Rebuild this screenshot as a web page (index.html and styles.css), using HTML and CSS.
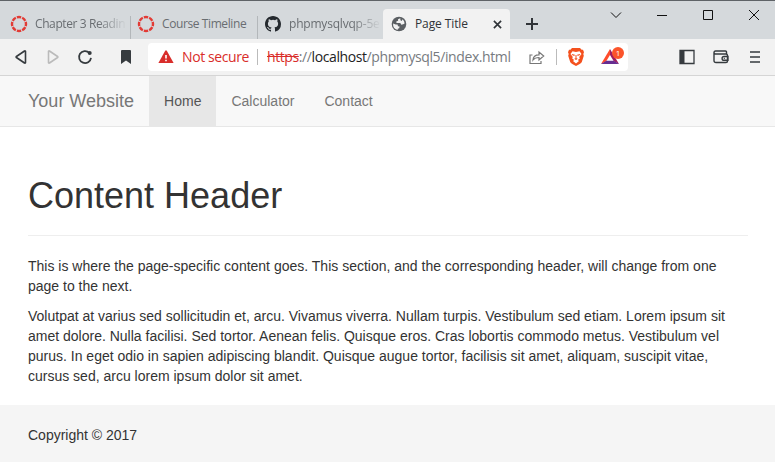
FILE: index.html
```html
<!DOCTYPE html>
<html lang="en">
<head>
<meta charset="utf-8">
<title>Page Title</title>
<link rel="stylesheet" href="styles.css">
</head>
<body>
<div class="tabstrip">
  <div class="tab">
    <svg class="favicon" viewBox="0 0 16 16"><circle class="ring" cx="8" cy="8" r="7" pathLength="80"/></svg>
    <span class="tab-title fade">Chapter 3 Readin</span>
  </div>
  <div class="tab">
    <svg class="favicon" viewBox="0 0 16 16"><circle class="ring" cx="8" cy="8" r="7" pathLength="80"/></svg>
    <span class="tab-title">Course Timeline</span>
  </div>
  <div class="tab tab-github">
    <svg class="favicon" viewBox="0 0 16 16"><path fill="#24292e" d="M8 0C3.58 0 0 3.58 0 8c0 3.54 2.29 6.53 5.47 7.59.4.07.55-.17.55-.38 0-.19-.01-.82-.01-1.49-2.01.37-2.53-.49-2.69-.94-.09-.23-.48-.94-.82-1.13-.28-.15-.68-.52-.01-.53.63-.01 1.08.58 1.23.82.72 1.21 1.87.87 2.33.66.07-.52.28-.87.51-1.07-1.78-.2-3.64-.89-3.64-3.95 0-.87.31-1.59.82-2.15-.08-.2-.36-1.02.08-2.12 0 0 .67-.21 2.2.82a7.6 7.6 0 0 1 4 0c1.53-1.04 2.2-.82 2.2-.82.44 1.1.16 1.92.08 2.12.51.56.82 1.27.82 2.15 0 3.07-1.87 3.75-3.65 3.95.29.25.54.73.54 1.48 0 1.07-.01 1.93-.01 2.2 0 .21.15.46.55.38A8.01 8.01 0 0 0 16 8c0-4.42-3.58-8-8-8z"/></svg>
    <span class="tab-title fade">phpmysqlvqp-5e</span>
  </div>
  <div class="tab tab-active">
    <svg class="favicon" viewBox="0 0 16 16"><circle cx="8" cy="8" r="7.3" fill="#5b5f63"/><path fill="#f2f2f2" d="M9.3 2.2 7 3.2l.1 1.6-1.8.6.2 1.7h3.8l1 1.6 1.9-.4 1.4-.8A6 6 0 0 0 11.6 3.2L10.7 5 9.4 4.3zM2.1 7.6l2.6.8 1.8.2.5 1.7 1.6.3-.4 1.6-1.4.5-.2 1.3A6 6 0 0 1 2.1 7.6z"/></svg>
    <span class="tab-title">Page Title</span>
    <svg class="tab-close" viewBox="0 0 10 10"><path d="m1 1 8 8m0-8-8 8"/></svg>
  </div>
  <svg class="new-tab" viewBox="0 0 12 12"><path d="M6 0v12M0 6h12"/></svg>
  <div class="window-controls">
    <svg viewBox="0 0 12 12"><path d="m1 3.5 5 5 5-5"/></svg>
    <svg viewBox="0 0 12 12"><path d="M1 6.5h10"/></svg>
    <svg viewBox="0 0 12 12"><path d="M1.5 1.5h9v9h-9z"/></svg>
    <svg viewBox="0 0 12 12"><path d="m1 1 10 10M11 1 1 11"/></svg>
  </div>
</div>
<div class="toolbar">
  <svg class="back" viewBox="0 0 16 16"><path d="M11.5 2.5v11a.6.6 0 0 1-1 .5L2.4 8.5a.6.6 0 0 1 0-1L10.500 2a.6.6 0 0 1 1 .5z"/></svg>
  <svg class="forward" viewBox="0 0 16 16"><path d="M3.500 2.500v11a.6.6 0 0 0 1 .5l8.100-5.500a.6.6 0 0 0 0-1L4.500 2a.6.6 0 0 0-1 .5z"/></svg>
  <svg class="reload" viewBox="0 0 16 16"><path d="M12.3 3.800A6 6 0 1 0 14 8.800"/><circle cx="12.700" cy="4" r="2" /></svg>
  <svg class="bookmark" viewBox="0 0 10 14"><path d="M1 0h8q1 0 1 1v13l-5-3.600L0 14V1q0-1 1-1z"/></svg>
  <div class="address">
    <svg class="warning" viewBox="0 0 16 14"><path fill="#d92d2a" d="M7.200.8q.8-1.200 1.600 0L15.600 13H.4z"/><path fill="#fff" d="M7.200 5h1.600v3.500H7.200zM7.200 9.700h1.600v1.600H7.200z"/></svg>
    <span class="insecure">Not secure</span>
    <span class="divider"></span>
    <span class="url"><s>https</s>://<b>localhost</b>/phpmysql5/index.html</span>
    <svg class="share" viewBox="0 0 16 16"><path d="M3.500 6H1v8.500h11V12M4 11c.2-3.600 2.200-5.200 6-5.200V3l4.700 4-4.700 4V8.500C7 8.500 5.500 9 4 11z"/></svg>
    <span class="divider divider-actions"></span>
    <svg class="brave" viewBox="0 0 16 18"><path fill="#f4511e" d="m4 0h8l1.600 1.800 1.400-.1 1 2.600-.7 1.700.5 1.700-2 6.300q-.5 1.300-5.800 4-5.300-2.700-5.800-4l-2-6.300.5-1.700L0 4.300l1-2.600 1.400.1z"/><path fill="#fff" d="m4.500 3.300 3.500.7 3.500-.7 2 2.800-2.300 2.900.6 1.500-2 1.600 1.200 1-3 2.300-3-2.300 1.200-1-2-1.600.6-1.500-2.300-2.900z"/><path fill="#f4511e" d="M3.800 6.100 7 6.800l-.8 1.200-2.200-.9zM12.200 6.100 9 6.800l.8 1.200 2.200-.9zM7.500 7h1v3.200l1.300.6-1.800 1.200-1.800-1.200 1.300-.6z"/></svg>
    <span class="rewards">
      <svg viewBox="0 0 18 16"><path fill="#ff4c2c" d="M9 0 0 15l5.200-2.700L9 6z"/><path fill="#9e1f63" d="m9 0 9 15-5.200-2.700L9 6z"/><path fill="#662d91" d="M0 15h18l-5.200-3.300H5.200z"/></svg>
      <span class="badge">1</span>
    </span>
  </div>
  <svg class="sidebar" viewBox="0 0 16 16"><path fill="none" stroke="#363b3f" stroke-width="1.300" d="M1 1.500h14v13H1z"/><path fill="#363b3f" d="M1 1.500h4.500v13H1z"/></svg>
  <svg class="wallet" viewBox="0 0 16 16"><path d="M13.500 5V3q0-1-1-1H2.500Q1 2 1 3.500T2.500 5H13q1.500 0 1.500 1.500v5.500q0 1.500-1.500 1.500H3Q1 13.500 1 11.500v-8M15 7.500h-4a1.900 1.900 0 0 0 0 3.800h4zM10.800 9.400h1"/></svg>
  <svg class="menu" viewBox="0 0 10 12"><path d="M0 1h10M0 6h10M0 11h10"/></svg>
</div>
<nav class="navbar">
  <a class="brand">Your Website</a>
  <a class="nav-link active">Home</a>
  <a class="nav-link">Calculator</a>
  <a class="nav-link">Contact</a>
</nav>
<main class="content">
  <h1>Content Header</h1>
  <p>This is where the page-specific content goes. This section, and the corresponding header, will change from one page to the next.</p>
  <p>Volutpat at varius sed sollicitudin et, arcu. Vivamus viverra. Nullam turpis. Vestibulum sed etiam. Lorem ipsum sit amet dolore. Nulla facilisi. Sed tortor. Aenean felis. Quisque eros. Cras lobortis commodo metus. Vestibulum vel purus. In eget odio in sapien adipiscing blandit. Quisque augue tortor, facilisis sit amet, aliquam, suscipit vitae, cursus sed, arcu lorem ipsum dolor sit amet.</p>
</main>
<footer class="footer">Copyright © 2017</footer>
</body>
</html>
```
FILE: styles.css
```css
* { box-sizing: border-box; }
body {
  margin: 0;
  height: 462px;
  overflow: hidden;
  display: flex;
  flex-direction: column;
  background: #fff;
  color: #333;
  font: 14px/20px "Liberation Sans", Arial, sans-serif;
}
svg { display: block; flex: none; overflow: visible; }

/* Browser tabs */
.tabstrip {
  height: 39px;
  flex: none;
  display: flex;
  align-items: flex-end;
  background: #d5d9dc;
  border-top: 1px solid #5f6367;
  font: 12px/16px "Open Sans", "Noto Sans", sans-serif;
}
.tab {
  width: 127px;
  height: 30px;
  flex: none;
  display: flex;
  align-items: center;
  padding-left: 11px;
  color: #696d71;
  background: linear-gradient(#b3b7ba, #b3b7ba) right bottom / 1px 23px no-repeat;
}
.tab:first-child { width: 131px; }
.tab:nth-child(2) { padding-left: 7px; }
.tab-github { width: 125px; padding-left: 7px; background: none; }
.tab-active {
  padding-left: 8px;
  background: #f2f2f2;
  color: #303438;
  border-radius: 4px 4px 0 0;
}
.favicon { width: 16px; height: 16px; margin-right: 8px; }
.ring { fill: none; stroke: #e23b35; stroke-width: 2.4; stroke-dasharray: 8 2; stroke-dashoffset: 4; }
.tab-title { white-space: nowrap; letter-spacing: -.4px; }
.tab-active .tab-title { letter-spacing: -.1px; }
.fade {
  width: 92px;
  -webkit-mask-image: linear-gradient(90deg, #000 68%, transparent);
  mask-image: linear-gradient(90deg, #000 68%, transparent);
}
.tab-github .tab-title { letter-spacing: -.2px; }
.tab-close { width: 9px; height: 9px; margin-left: auto; margin-right: 8px; fill: none; stroke: #303438; stroke-width: 1.8; }
.new-tab { width: 12px; height: 12px; margin: 0 0 9px 16px; stroke: #303438; stroke-width: 2; }
.window-controls {
  display: flex;
  gap: 34px;
  margin-left: auto;
  margin-right: 15px;
  align-self: flex-start;
  padding-top: 8px;
}
.window-controls svg { width: 12px; height: 12px; fill: none; stroke: #111; stroke-width: 1; }

/* Address bar */
.toolbar {
  height: 37px;
  flex: none;
  display: flex;
  align-items: center;
  padding: 0 15px 0 14px;
  background: #f2f2f2;
  border-bottom: 1px solid #d5d5d5;
  font: 14px/20px "Open Sans", "Noto Sans", sans-serif;
}
.back, .forward, .reload { width: 16px; height: 16px; fill: none; stroke: #363b3f; stroke-width: 1.6; }
.forward { margin-left: 15px; stroke: #bbb; }
.reload { margin-left: 16px; stroke-width: 1.8; }
.reload circle { fill: #363b3f; stroke: none; }
.bookmark { width: 10px; height: 14px; margin-left: 28px; margin-right: 17px; fill: #363b3f; }
.address {
  width: 480px;
  height: 28px;
  flex: none;
  display: flex;
  align-items: center;
  padding-left: 10px;
  background: #fff;
  border-radius: 4px;
}
.warning { width: 16px; height: 14px; }
.insecure { width: 67px; margin-left: 8px; color: #d92d2a; white-space: nowrap; letter-spacing: -.4px; }
.divider { width: 1px; height: 16px; margin-left: 8px; background: #bbb; }
.url { width: 245px; margin-left: 9px; color: #777b7f; white-space: nowrap; letter-spacing: -.4px; }
.url s { color: #d92d2a; }
.url b { color: #222; font-weight: 400; }
.share { width: 16px; height: 16px; margin-left: 17px; fill: none; stroke: #777; stroke-width: 1.2; }
.divider-actions { margin-left: 11px; }
.brave { width: 16px; height: 18px; margin-left: 11px; }
.rewards { position: relative; margin-left: 17px; }
.rewards svg { width: 18px; height: 16px; }
.badge {
  position: absolute;
  left: 11px;
  top: -2px;
  width: 12px;
  height: 12px;
  border-radius: 50%;
  background: #fb542b;
  color: #fff;
  font-size: 8px;
  line-height: 12px;
  text-align: center;
}
.sidebar { width: 16px; height: 16px; margin-left: 51px; }
.wallet { width: 16px; height: 16px; margin-left: 18px; fill: none; stroke: #363b3f; stroke-width: 1.4; }
.menu { width: 10px; height: 12px; margin-left: auto; stroke: #363b3f; stroke-width: 1.6; }

/* Page */
.navbar {
  height: 51px;
  flex: none;
  display: flex;
  padding-left: 13px;
  background: #f8f8f8;
  border-bottom: 1px solid #e7e7e7;
  color: #777;
}
.brand, .nav-link { padding: 15px; }
.brand { font-size: 18px; }
.nav-link.active { background: #e7e7e7; color: #555; }
.content { padding: 49px 27px 0 28px; height: 278px; flex: none; }
h1 {
  margin: 0 0 20px;
  padding-bottom: 19px;
  border-bottom: 1px solid #eee;
  font-size: 36px;
  font-weight: 500;
  line-height: 40px;
}
p { margin: 0 0 10px; }
.footer { flex: 1; padding: 20px 28px; background: #f5f5f5; }
```
